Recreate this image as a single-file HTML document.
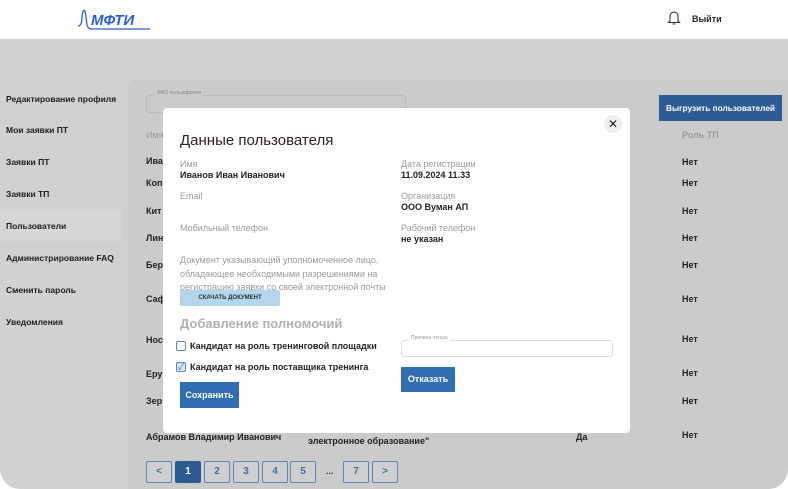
<!DOCTYPE html>
<html><head><meta charset="utf-8"><style>
*{box-sizing:border-box;margin:0;padding:0}
body{width:788px;height:489px;overflow:hidden;background:#fff;font-family:"Liberation Sans","Noto Sans CJK SC",sans-serif;position:relative}
.a{position:absolute}
.b{font-weight:bold;font-size:9px;color:#222}
.side{font-weight:bold;font-size:8.5px;color:#1c1c1c;left:6px}
.g{color:#9a9a9a;font-size:9px}
.pg{position:absolute;top:461px;width:26px;height:22px;border:1px solid #5a86b8;border-radius:2px;color:#3a6fb0;font-size:10px;font-weight:bold;text-align:center;line-height:20px;background:#cfcfcf}
</style></head><body>
<div class="a" style="left:0;top:0;width:788px;height:39px;background:#fff"></div>
<svg class="a" style="left:76px;top:7px" width="76" height="26" viewBox="0 0 76 26">
<path d="M2 19 Q6 19 6 10 Q7 1 9 4 Q10 10 11 18 Q12 22 16 22 L74 22" stroke="#2a5fd0" stroke-width="1.3" fill="none"/>
<text x="15" y="18" font-family="Liberation Sans" font-weight="bold" font-style="italic" font-size="15" fill="#2a5fd0">МФТИ</text>
</svg>
<svg class="a" style="left:667px;top:10px" width="14" height="16" viewBox="0 0 14 16"><path d="M3 11 V6 a4 4 0 0 1 8 0 V11 L12.5 12.5 H1.5 Z M5.5 14 h3" stroke="#333" stroke-width="1.1" fill="none"/></svg>
<div class="a b" style="left:692px;top:14px;font-size:9px">Выйти</div>
<div class="a" style="left:0;top:39px;width:788px;height:450px;background:#d1d1d1;border-radius:0 0 20px 20px"></div>
<div class="a" style="left:128px;top:80px;width:660px;height:409px;background:#cbcbcb;border-radius:6px 0 20px 0"></div>
<div class="a" style="left:0;top:209px;width:121px;height:32px;background:#d6d6d6"></div>
<div class="a side" style="top:94px">Редактирование профиля</div>
<div class="a side" style="top:125px">Мои заявки ПТ</div>
<div class="a side" style="top:157px">Заявки ПТ</div>
<div class="a side" style="top:189px">Заявки ТП</div>
<div class="a side" style="top:221px">Пользователи</div>
<div class="a side" style="top:253px">Администрирование FAQ</div>
<div class="a side" style="top:285px">Сменить пароль</div>
<div class="a side" style="top:317px">Уведомления</div>
<div class="a" style="left:146px;top:95px;width:260px;height:18px;border:1px solid #bbb;border-radius:3px"></div>
<div class="a" style="left:155px;top:90px;font-size:5px;color:#888;background:#cbcbcb;padding:0 2px">ФИО пользователя</div>
<div class="a" style="left:659px;top:95px;width:123px;height:26px;background:#2d5b94;color:#fff;font-size:8.3px;font-weight:bold;text-align:center;line-height:26px;white-space:nowrap">Выгрузить пользователей</div>
<div class="a g" style="left:146px;top:130px">Имя</div>
<div class="a" style="left:682px;top:130px;font-size:9px;color:#999;font-weight:bold">Роль ТП</div>
<div class="a b" style="left:146px;top:156px">Ива</div>
<div class="a b" style="left:146px;top:178px">Коп</div>
<div class="a b" style="left:146px;top:206px">Кит</div>
<div class="a b" style="left:146px;top:233px">Лин</div>
<div class="a b" style="left:146px;top:260px">Бер</div>
<div class="a b" style="left:146px;top:294px">Саф</div>
<div class="a b" style="left:146px;top:335px">Нос</div>
<div class="a b" style="left:146px;top:369px">Ерун</div>
<div class="a b" style="left:146px;top:396px">Зер</div>
<div class="a b" style="left:146px;top:432px">Абрамов Владимир Иванович</div>
<div class="a b" style="left:308px;top:436px">электронное образование"</div>
<div class="a b" style="left:576px;top:432px">Да</div>
<div class="a b" style="left:682px;top:157px">Нет</div>
<div class="a b" style="left:682px;top:178px">Нет</div>
<div class="a b" style="left:682px;top:206px">Нет</div>
<div class="a b" style="left:682px;top:233px">Нет</div>
<div class="a b" style="left:682px;top:260px">Нет</div>
<div class="a b" style="left:682px;top:294px">Нет</div>
<div class="a b" style="left:682px;top:334px">Нет</div>
<div class="a b" style="left:682px;top:368px">Нет</div>
<div class="a b" style="left:682px;top:396px">Нет</div>
<div class="a b" style="left:682px;top:430px">Нет</div>
<div class="pg" style="left:146px">&lt;</div>
<div class="pg" style="left:175px;background:#2d5b94;color:#fff;border-color:#2d5b94">1</div>
<div class="pg" style="left:204px">2</div>
<div class="pg" style="left:233px">3</div>
<div class="pg" style="left:262px">4</div>
<div class="pg" style="left:290px">5</div>
<div class="a b" style="left:326px;top:466px;color:#333">...</div>
<div class="pg" style="left:343px">7</div>
<div class="pg" style="left:372px">&gt;</div>
<div class="a" style="left:163px;top:108px;width:467px;height:325px;background:#fff;border-radius:4px"></div>
<div class="a" style="left:604px;top:115px;width:18px;height:18px;border-radius:50%;background:#eee;text-align:center;line-height:18px;font-size:12px;color:#222">✕</div>
<div class="a" style="left:180px;top:132px;font-size:15px;color:#2a2020">Данные пользователя</div>
<div class="a g" style="left:180px;top:159px">Имя</div>
<div class="a b" style="left:180px;top:170px">Иванов Иван Иванович</div>
<div class="a g" style="left:180px;top:191px">Email</div>
<div class="a g" style="left:180px;top:223px">Мобильный телефон</div>
<div class="a g" style="left:180px;top:254px;line-height:13.5px;width:230px">Документ указывающий уполномоченное лицо, обладающее необходимыми разрешениями на регистрацию заявки со своей электронной почты</div>
<div class="a" style="left:180px;top:290px;width:100px;height:16px;background:#b3d5ee;border-radius:2px;font-size:6px;font-weight:bold;color:#233;text-align:center;line-height:16px">СКАЧАТЬ ДОКУМЕНТ</div>
<div class="a" style="left:180px;top:316px;font-size:13px;color:#b0b0b0;font-weight:bold">Добавление полномочий</div>
<div class="a" style="left:176px;top:341px;width:10px;height:10px;border:1px solid #5a86b8;border-radius:2px"></div>
<div class="a b" style="left:190px;top:341px">Кандидат на роль тренинговой площадки</div>
<div class="a" style="left:176px;top:362px;width:10px;height:10px;border:1px solid #5a86b8;border-radius:2px;background:#dbe7f3;font-size:9px;line-height:9px;color:#3a6fb0;text-align:center">✓</div>
<div class="a b" style="left:190px;top:362px">Кандидат на роль поставщика тренинга</div>
<div class="a" style="left:180px;top:382px;width:59px;height:26px;background:#2f6db5;color:#fff;font-size:9px;font-weight:bold;text-align:center;line-height:26px">Сохранить</div>
<div class="a g" style="left:401px;top:159px">Дата регистрации</div>
<div class="a b" style="left:401px;top:170px">11.09.2024 11.33</div>
<div class="a g" style="left:401px;top:191px">Организация</div>
<div class="a b" style="left:401px;top:202px">ООО Вуман АП</div>
<div class="a g" style="left:401px;top:223px">Рабочий телефон</div>
<div class="a b" style="left:401px;top:234px">не указан</div>
<div class="a" style="left:401px;top:340px;width:212px;height:17px;border:1px solid #ddd;border-radius:3px"></div>
<div class="a" style="left:409px;top:335px;font-size:5px;color:#999;background:#fff;padding:0 2px">Причина отказа</div>
<div class="a" style="left:401px;top:367px;width:54px;height:25px;background:#2f6db5;color:#fff;font-size:9px;font-weight:bold;text-align:center;line-height:25px">Отказать</div>
</body></html>
